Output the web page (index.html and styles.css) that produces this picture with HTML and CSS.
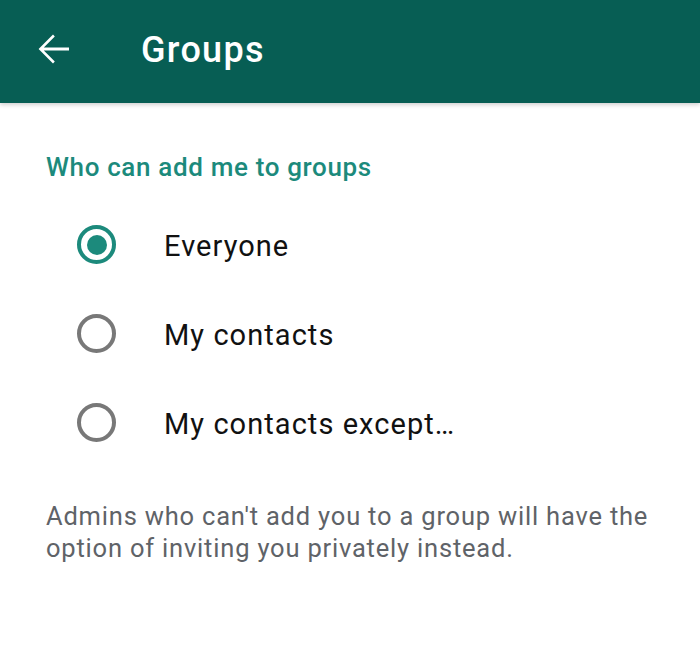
FILE: index.html
```html
<!DOCTYPE html>
<html lang="en">
<head>
  <meta charset="UTF-8" />
  <meta name="viewport" content="width=device-width, initial-scale=1.0"/>
  <title>Groups</title>
  <link rel="stylesheet" href="styles.css">
</head>
<body>

<div class="appbar">
  <svg class="back" viewBox="0 0 24 24" width="48" height="48">
    <path fill="#fff" d="M20 11.2H7.4l5.5-5.5L12 4.8 4.8 12l7.2 7.2.9-.9-5.5-5.5H20z"/>
  </svg>
  <span class="title">Groups</span>
</div>

<div class="content">
  <div class="section-title">Who can add me to groups</div>

  <div class="options">
    <div class="option">
      <span class="radio checked"></span>
      <span class="label">Everyone</span>
    </div>
    <div class="option">
      <span class="radio"></span>
      <span class="label">My contacts</span>
    </div>
    <div class="option">
      <span class="radio"></span>
      <span class="label">My contacts except…</span>
    </div>
  </div>

  <p class="note">Admins who can't add you to a group will have the option of inviting you privately instead.</p>
</div>

</body>
</html>
```

FILE: styles.css
```css
/* base */
body {
  margin: 0;
  font-family: Roboto, 'Liberation Sans', sans-serif;
  background: #fff;
}

/* app bar */
.appbar {
  height: 103px;
  background: #075e54;
  display: flex;
  align-items: center;
  padding-left: 29px;
  box-shadow: 0 2px 4px rgba(0,0,0,0.18);
}

.back {
  display: block;
  margin-top: -6px;
}

.title {
  margin-left: 64px;
  margin-top: -3px;
  color: #fff;
  font-size: 36px;
  font-weight: 500;
  letter-spacing: 1.3px;
}

/* settings */
.content {
  padding: 0 46px;
}

.section-title {
  margin-top: 49px;
  color: #1c8a7c;
  font-size: 26px;
  font-weight: 500;
  letter-spacing: 0.65px;
}

.options {
  margin-top: 18px;
  margin-left: 31px;
}

.option {
  display: flex;
  align-items: center;
  height: 89px;
}

.radio {
  width: 31px;
  height: 31px;
  border: 4px solid #787878;
  border-radius: 50%;
  box-sizing: content-box;
  position: relative;
  flex-shrink: 0;
}

.radio.checked {
  border-color: #1c8a7c;
}

.radio.checked::after {
  content: "";
  position: absolute;
  top: 5.5px;
  left: 5.5px;
  width: 20px;
  height: 20px;
  border-radius: 50%;
  background: #1c8a7c;
}

.label {
  margin-left: 48px;
  margin-top: 3px;
  font-size: 29px;
  letter-spacing: 1.05px;
  color: #111;
}

.note {
  margin: 33px 0 0;
  color: #5f6368;
  font-size: 25.5px;
  line-height: 32px;
  letter-spacing: 0.8px;
}
```
